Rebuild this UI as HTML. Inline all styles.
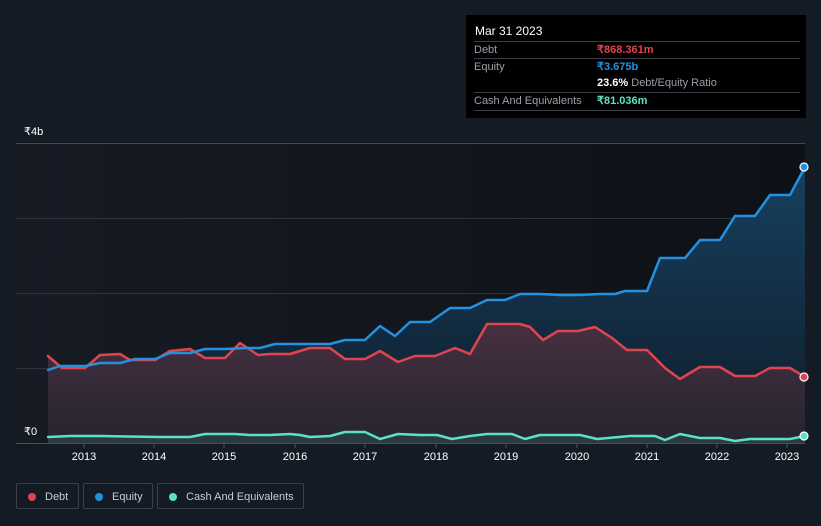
<!DOCTYPE html>
<html><head><meta charset="utf-8"><style>
body{margin:0;width:821px;height:526px;background:#151b25;font-family:"Liberation Sans",sans-serif;overflow:hidden;position:relative}
.tt{position:absolute;left:466px;top:15px;width:340px;height:103px;background:#000;color:#fff;font-size:11px}
.tt .r{position:absolute;left:8px;width:326px;border-top:1px solid #3a3d44;height:17px;line-height:17px}
.tt .l{color:#9aa0a8;position:absolute;left:0}
.tt .v{position:absolute;left:123px;font-weight:bold}
.ax{position:absolute;color:#fff;font-size:11px}
.leg{position:absolute;top:483px;height:26px;border:1px solid #3a404b;border-radius:2px;color:#c8ccd2;font-size:11px;line-height:26px;box-sizing:border-box}
.leg i{position:absolute;left:11px;top:9px;width:8px;height:8px;border-radius:50%}
</style></head><body>
<svg width="821" height="526" style="position:absolute;left:0;top:0">
<defs>
<linearGradient id="bg" x1="0" x2="1"><stop offset="0" stop-color="#161b24"/><stop offset="1" stop-color="#0e1117"/></linearGradient>
<linearGradient id="eq" x1="0" y1="0" x2="0" y2="1"><stop offset="0" stop-color="#16405e"/><stop offset="1" stop-color="#101c2a"/></linearGradient>
<linearGradient id="db" x1="0" y1="0" x2="0" y2="1"><stop offset="0" stop-color="#4a3040"/><stop offset="1" stop-color="#262530"/></linearGradient>
</defs>
<rect x="16" y="143" width="789" height="300" fill="url(#bg)"/>
<g stroke="#2e333c" stroke-width="1">
<line x1="16" x2="805" y1="143.5" y2="143.5" stroke="#444a54"/><line x1="16" x2="805" y1="218.5" y2="218.5"/><line x1="16" x2="805" y1="293.5" y2="293.5"/><line x1="16" x2="805" y1="368.5" y2="368.5"/>
</g>
<path fill="url(#eq)" d="M48,370 L60,366 L85,366 L100,363 L120,363 L135,359 L155,359 L170,353 L190,353 L205,349 L225,349 L245,348 L260,348 L275,344 L330,344 L345,340 L365,340 L380,326 L395,336 L410,322 L430,322 L450,308 L470,308 L487,300 L505,300 L520,294 L540,294 L560,295 L580,295 L600,294 L615,294 L625,291 L647,291 L660,258 L685,258 L700,240 L720,240 L735,216 L755,216 L770,195 L790,195 L805,167 L805,443 L48,443Z"/>
<path fill="url(#db)" opacity="0.95" d="M48,356 L62,368 L85,368 L100,355 L120,354 L130,360 L155,360 L170,351 L190,349 L205,358 L225,358 L240,343 L258,355 L270,354 L290,354 L310,348 L330,348 L345,359 L365,359 L380,351 L398,362 L415,356 L435,356 L455,348 L470,354 L487,324 L520,324 L530,327 L543,340 L558,331 L578,331 L595,327 L612,338 L627,350 L647,350 L665,368 L680,379 L700,367 L720,367 L735,376 L755,376 L770,368 L790,368 L805,377 L805,443 L48,443Z"/>
<path fill="#2a3a40" d="M48,437 L70,436 L100,436 L160,437 L190,437 L205,434 L235,434 L250,435 L270,435 L290,434 L300,435 L310,437 L330,436 L345,432 L365,432 L380,439 L398,434 L420,435 L437,435 L452,439 L470,436 L487,434 L512,434 L525,439 L540,435 L580,435 L597,439 L630,436 L655,436 L665,440 L680,434 L700,438 L720,438 L735,441 L750,439 L790,439 L805,436 L805,443 L48,443Z"/>
<g fill="none" stroke-width="2.5" stroke-linejoin="round" stroke-linecap="round">
<path stroke="#e0454f" d="M48,356 L62,368 L85,368 L100,355 L120,354 L130,360 L155,360 L170,351 L190,349 L205,358 L225,358 L240,343 L258,355 L270,354 L290,354 L310,348 L330,348 L345,359 L365,359 L380,351 L398,362 L415,356 L435,356 L455,348 L470,354 L487,324 L520,324 L530,327 L543,340 L558,331 L578,331 L595,327 L612,338 L627,350 L647,350 L665,368 L680,379 L700,367 L720,367 L735,376 L755,376 L770,368 L790,368 L805,377"/>
<path stroke="#2391e0" d="M48,370 L60,366 L85,366 L100,363 L120,363 L135,359 L155,359 L170,353 L190,353 L205,349 L225,349 L245,348 L260,348 L275,344 L330,344 L345,340 L365,340 L380,326 L395,336 L410,322 L430,322 L450,308 L470,308 L487,300 L505,300 L520,294 L540,294 L560,295 L580,295 L600,294 L615,294 L625,291 L647,291 L660,258 L685,258 L700,240 L720,240 L735,216 L755,216 L770,195 L790,195 L805,167"/>
<path stroke="#5ee0c8" d="M48,437 L70,436 L100,436 L160,437 L190,437 L205,434 L235,434 L250,435 L270,435 L290,434 L300,435 L310,437 L330,436 L345,432 L365,432 L380,439 L398,434 L420,435 L437,435 L452,439 L470,436 L487,434 L512,434 L525,439 L540,435 L580,435 L597,439 L630,436 L655,436 L665,440 L680,434 L700,438 L720,438 L735,441 L750,439 L790,439 L805,436"/>
</g>
<line x1="16" x2="805" y1="443.5" y2="443.5" stroke="#4a505a"/>
<g stroke="#4a505a"><line x1="84" x2="84" y1="443" y2="448"/><line x1="154" x2="154" y1="443" y2="448"/><line x1="224" x2="224" y1="443" y2="448"/><line x1="295" x2="295" y1="443" y2="448"/><line x1="365" x2="365" y1="443" y2="448"/><line x1="436" x2="436" y1="443" y2="448"/><line x1="506" x2="506" y1="443" y2="448"/><line x1="577" x2="577" y1="443" y2="448"/><line x1="647" x2="647" y1="443" y2="448"/><line x1="717" x2="717" y1="443" y2="448"/><line x1="787" x2="787" y1="443" y2="448"/></g>
<circle cx="804" cy="167" r="4" fill="#2391e0" stroke="#fff" stroke-width="1.2"/>
<circle cx="804" cy="377" r="4" fill="#e0454f" stroke="#fff" stroke-width="1.2"/>
<circle cx="804" cy="436" r="4" fill="#5ee0c8" stroke="#fff" stroke-width="1.2"/>
<g fill="#fff" font-size="11" font-family="Liberation Sans,sans-serif" text-anchor="middle">
<text x="84" y="460">2013</text><text x="154" y="460">2014</text><text x="224" y="460">2015</text><text x="295" y="460">2016</text><text x="365" y="460">2017</text><text x="436" y="460">2018</text><text x="506" y="460">2019</text><text x="577" y="460">2020</text><text x="647" y="460">2021</text><text x="717" y="460">2022</text><text x="787" y="460">2023</text>
</g>
</svg>
<div class="ax" style="left:24px;top:125px">₹4b</div>
<div class="ax" style="left:24px;top:425px">₹0</div>
<div class="tt">
<div style="position:absolute;left:9px;top:9px;font-size:12px">Mar 31 2023</div>
<div class="r" style="top:26px"><span class="l">Debt</span><span class="v" style="color:#e0454f">₹868.361m</span></div>
<div class="r" style="top:43px"><span class="l">Equity</span><span class="v" style="color:#2391e0">₹3.675b</span></div>
<div class="r" style="top:60px;border-top:none"><span class="v" style="color:#fff">23.6% <span style="color:#9aa0a8;font-weight:normal">Debt/Equity Ratio</span></span></div>
<div class="r" style="top:77px"><span class="l">Cash And Equivalents</span><span class="v" style="color:#5ee0c8">₹81.036m</span></div>
<div class="r" style="top:95px;height:0"></div>
</div>
<div class="leg" style="left:16px;width:63px"><i style="background:#e0454f"></i><span style="position:absolute;left:28px">Debt</span></div>
<div class="leg" style="left:83px;width:70px"><i style="background:#2391e0"></i><span style="position:absolute;left:28px">Equity</span></div>
<div class="leg" style="left:157px;width:147px"><i style="background:#5ee0c8"></i><span style="position:absolute;left:28px">Cash And Equivalents</span></div>
</body></html>
